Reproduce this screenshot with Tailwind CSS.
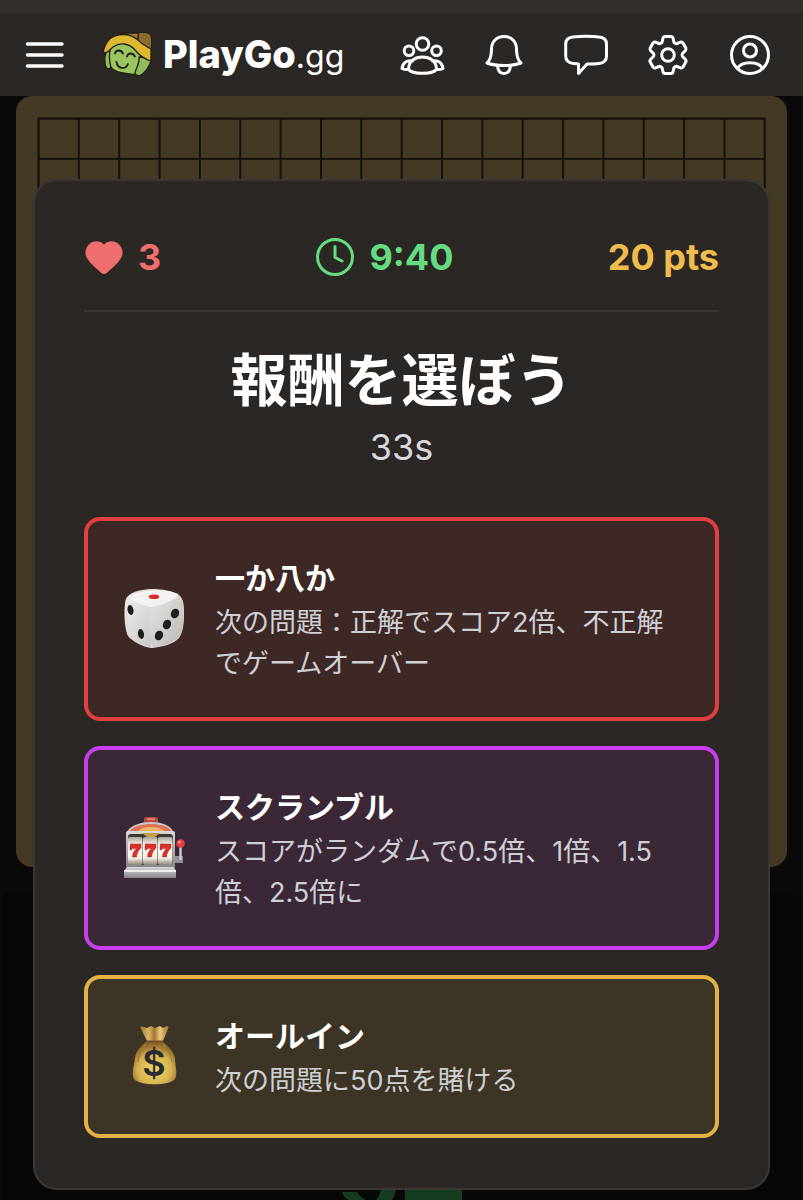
<!DOCTYPE html>
<html lang="ja">
<head>
<meta charset="utf-8">
<meta name="viewport" content="width=device-width, initial-scale=1">
<title>PlayGo.gg</title>
<script src="https://cdn.jsdelivr.net/npm/@tailwindcss/browser@4"></script>
</head>
<body class="bg-[#0b0909] font-['Inter','Noto_Sans_CJK_JP',sans-serif] text-white">
<div class="relative flex h-screen min-h-[1200px] flex-col overflow-hidden">
  <header class="flex h-24 shrink-0 items-end border-t-[14px] border-[#322e2b] bg-[#2b2725] pr-[29px] pl-5">
    <div class="flex h-[82px] w-full items-center justify-between">
      <div class="flex items-center">
        <button type="button" aria-label="メニュー" class="size-12">
          <svg viewBox="0 0 48 48" class="size-12" stroke="#fff" stroke-width="3.400" stroke-linecap="round"><path d="M7.500 13H42M7.500 24H42M7.500 35H42"/></svg>
        </button>
        <a href="#" class="ml-[34px] flex items-center gap-[11px]">
          <svg viewBox="0 0 50 46" class="h-[46px] w-[50px]" stroke="#211d12" stroke-width="1.300" stroke-linejoin="round" stroke-linecap="round">
            <path fill="#a67a32" d="M14 4C18 2 20 1 24 1h19q6 0 6 6v11C43 15 38 10 30 6z"/>
            <path fill="#8a6a2d" stroke="none" d="M36 1h7q6 0 6 6v9L35 6z"/>
            <path fill="none" d="M36.500 1L36 7"/>
            <path fill="#91bb58" d="M8 15C4 19 2 24 3 30c0 4 1 6 3 7 2 0 3-1 3-3z"/>
            <path fill="#9ac45f" d="M9 14C15 8 27 7 33 16c4 3 7 8 6 14l-4 12c-5 1-9 0-14-1-6-1-10-3-12-6-2-6-2-14 0-21z"/>
            <path fill="#91bb58" d="M37 25c1 6-3 11-4 16 1 3 4 3 6 2 5-3 8-8 10-14v-3z"/>
            <path fill="#dcb72f" d="M1 20C3 12 7 6 13 4c9-3 17-1 23 4 4 4 9 7 13 9v12c-7-2-12-6-16-11-6-7-15-8-22-3-4 3-5 7-10 5z"/>
            <path fill="none" stroke-width="1.800" d="M13 21.500c1-4 6-4 8 0M25 24.500c1-4 6-4 8 0M14.500 30c1 7 9 8 11.500 2"/>
          </svg>
          <span class="text-[32px] leading-[44px] whitespace-nowrap"><b class="text-[38px] font-extrabold">PlayGo</b>.gg</span>
        </a>
      </div>
      <nav class="flex items-center gap-[34px]" aria-label="アカウント">
        <button type="button" aria-label="友達" class="size-12">
          <svg viewBox="0 0 48 48" class="size-12" fill="none" stroke="#fff" stroke-width="3" stroke-linecap="round" stroke-linejoin="round"><circle cx="24.500" cy="13" r="6.300"/><circle cx="11" cy="19.700" r="4.800"/><circle cx="38.500" cy="19.700" r="4.800"/><path d="M10.500 37.500C11 30 17 26 24.500 26S38 30 38.500 37.500C38 40 33 42.300 24.500 42.300S11 40 10.500 37.500zM14.500 30C9 28.500 4.500 32 4 37.500c2 1 4 1.300 6.500 1M34.500 30c5.500-1.500 10 2 10.500 7.500-2 1-4 1.300-6.500 1"/></svg>
        </button>
        <button type="button" aria-label="通知" class="size-12">
          <svg viewBox="0 0 48 48" class="size-12" fill="none" stroke="#fff" stroke-width="3" stroke-linecap="round" stroke-linejoin="round"><path d="M7 32c3.500-3 4.500-8 4.500-14C11.500 10.500 16.500 5.500 24 5.500S36.500 10.500 36.500 18c0 6 1 11 4.500 14-5 1.800-11 2.500-17 2.500S12 33.800 7 32zM17.500 34.500c.300 5 2.500 8 6.500 8s6.200-3 6.500-8"/></svg>
        </button>
        <button type="button" aria-label="チャット" class="size-12">
          <svg viewBox="0 0 48 48" class="size-12" fill="none" stroke="#fff" stroke-width="3" stroke-linecap="round" stroke-linejoin="round"><path d="M11 6c8-1 18-1 26 0 5 .500 7.500 2.500 7.500 7v12c0 5-2.500 7-7.500 7.500-3 .400-7 .500-12 .500l-8.500 9.500V33l-5-.500C6.500 32 3.700 30 3.700 25V13C3.700 8.500 6.500 6.500 11 6z"/></svg>
        </button>
        <button type="button" aria-label="設定" class="size-12">
          <svg viewBox="-24 -24 48 48" class="size-12" fill="none" stroke="#fff" stroke-width="3" stroke-linecap="round" stroke-linejoin="round"><circle r="6.300"/><path d="M-6-12.500L-5-17Q-4.600-18.500-3-18.500H3Q4.600-18.500 5-17L6-12.500Q7.500-11 9-11.500L12.500-12.800Q14-13.400 15-12L17.800-7Q18.500-5.700 17.500-4.500L14.500-1.500Q13.700 0 14.500 1.500L17.500 4.500Q18.500 5.700 17.800 7L15 12Q14 13.400 12.500 12.800L9 11.500Q7.500 11 6 12.500L5 17Q4.600 18.500 3 18.500H-3Q-4.600 18.500-5 17L-6 12.500Q-7.500 11-9 11.500L-12.500 12.800Q-14 13.400-15 12L-17.800 7Q-18.500 5.700-17.500 4.500L-14.500 1.500Q-13.700 0-14.500-1.500L-17.500-4.500Q-18.500-5.700-17.800-7L-15-12Q-14-13.400-12.500-12.800L-9-11.500Q-7.500-11-6-12.500Z"/></svg>
        </button>
        <button type="button" aria-label="プロフィール" class="size-12">
          <svg viewBox="0 0 48 48" class="size-12" fill="none" stroke="#fff" stroke-width="3" stroke-linecap="round"><circle cx="24" cy="24" r="18.500"/><circle cx="24" cy="19.500" r="6.500"/><path d="M11.500 37.500C14 33 19 31.800 24 31.800s10 1.200 12.500 5.700"/></svg>
        </button>
      </nav>
    </div>
  </header>

  <div class="px-4" aria-hidden="true">
    <svg viewBox="0 0 771 771" class="block w-full">
      <defs><pattern id="cell" width="40.350" height="40.350" patternUnits="userSpaceOnUse" x="22.500" y="22.500"><path d="M0 0H40.350V40.350H0z" stroke="#15120e" stroke-width="2" fill="none"/></pattern></defs>
      <rect width="771" height="771" rx="16" fill="#433925"/>
      <rect x="22.500" y="22.500" width="726.300" height="726.300" fill="url(#cell)" stroke="#15120e" stroke-width="2"/>
    </svg>
  </div>
  <div class="mx-[2px] mt-[25px] flex grow items-end justify-center rounded-t-lg bg-[#080707]" aria-hidden="true">
    <svg viewBox="0 0 120 16" class="h-4 w-[120px]" fill="#153c20"><path d="M0 8H15Q18 13 24 16H7Q1 13 0 8zM39 0H54Q54 10 50 16H34Q39 11 39 0zM63 0H120V16H63z"/></svg>
  </div>

  <main role="dialog" aria-labelledby="title" class="absolute inset-x-[33px] top-[179px] rounded-3xl border-2 border-[#3a3734] bg-[#2b2725] px-[49px] pt-[51px] pb-[50px]">
    <div class="flex items-center justify-between border-b-2 border-[#393532] pb-7 text-[36px] leading-[50px] font-bold">
      <div class="flex items-center gap-[14px] text-[#f06e6e]">
        <svg viewBox="0 0 40 40" class="size-10" fill="currentColor"><path d="M20 7.500C16 3.500 10 3.500 6 6.500 1 10.500 0 17 3.500 22c3.500 5 9 9.500 13.500 13.700 2 1.700 4 1.700 6 0C27.500 31.500 33 27 36.500 22 40 17 39 10.500 34 6.500 30 3.500 24 3.500 20 7.500z"/></svg>
        <span>3</span>
      </div>
      <div class="flex items-center gap-[14px] text-[#65dc81]">
        <svg viewBox="0 0 40 40" class="size-10" fill="none" stroke="currentColor" stroke-width="3" stroke-linecap="round" stroke-linejoin="round"><circle cx="20" cy="20" r="17.500"/><path d="M20 9.500V20.500L27 24"/></svg>
        <span>9:40</span>
      </div>
      <div class="text-[#f0bc4d]">20 pts</div>
    </div>
    <h1 id="title" class="mt-[34px] text-center text-[57px] leading-[70px] font-bold">報酬を選ぼう</h1>
    <p class="text-center text-[36px] leading-[62px] text-[#d7d9de]">33s</p>

    <div class="mt-[39px] flex flex-col gap-[25px]">
      <button type="button" class="flex items-center gap-[29px] rounded-2xl border-4 border-[#e2403f] bg-[#3d2826] px-9 py-[33px] text-left">
        <svg viewBox="0 0 62 62" class="size-[62px] shrink-0">
          <defs><linearGradient id="dl" x1="0" y1="0" x2="1" y2="1"><stop stop-color="#eeedeb"/><stop offset="1" stop-color="#c9c7c5"/></linearGradient><linearGradient id="dr" x1="0" y1="0" x2="1" y2="1"><stop stop-color="#e7e5e3"/><stop offset="1" stop-color="#bab7b5"/></linearGradient></defs>
          <path fill="#dedcda" d="M3 9C8 3 20 1 29 1s20 2 26 6c5 4 5 12 5 20s-1 17-5 23c-5 6-17 9-27 10C18 59 8 53 4 48 0 41-1 16 3 9z"/>
          <path fill="url(#dl)" d="M2 11C6 9 19 15 24 20c4 5 5 36 2 39C18 57 8 52 4 47 1 40 0 18 2 11z"/>
          <path fill="url(#dr)" d="M28 22c6-5 22-11 29-12 4 4 3 31-1 38-5 6-16 10-26 11-5-2-6-31-2-37z"/>
          <path fill="#f3f2f0" d="M5 8C12 2 43 0 54 6c3 3-17 12-27 13C19 18 2 11 5 8z"/>
          <ellipse cx="30" cy="8.700" rx="5.200" ry="2.300" fill="#d72a2b"/>
          <g fill="#1d1d20"><ellipse cx="6.500" cy="22" rx="3" ry="5" transform="rotate(-10 6.500 22)"/><ellipse cx="17" cy="46" rx="3" ry="5" transform="rotate(-10 17 46)"/><ellipse cx="51" cy="25.500" rx="4" ry="5" transform="rotate(25 51 25.500)"/><ellipse cx="43" cy="36.500" rx="4" ry="5" transform="rotate(25 43 36.500)"/><ellipse cx="35" cy="47.500" rx="4" ry="5" transform="rotate(25 35 47.500)"/></g>
        </svg>
        <span class="min-w-0">
          <strong class="block text-[30px] leading-[48px] font-bold">一か八か</strong>
          <span class="block text-[27px] leading-[41px] text-[#ced0d5]">次の問題：正解でスコア2倍、不正解でゲームオーバー</span>
        </span>
      </button>

      <button type="button" class="flex items-center gap-[29px] rounded-2xl border-4 border-[#c83ded] bg-[#3a2837] px-9 py-[33px] text-left">
        <svg viewBox="0 0 62 62" class="size-[62px] shrink-0">
          <defs><linearGradient id="mt" x1="0" y1="0" x2="0" y2="1"><stop stop-color="#d8d8d9"/><stop offset="1" stop-color="#858587"/></linearGradient><linearGradient id="reel" x1="0" y1="0" x2="0" y2="1"><stop stop-color="#aaa59b"/><stop offset=".3" stop-color="#fffdf4"/><stop offset=".75" stop-color="#f4f0e5"/><stop offset="1" stop-color="#8c877d"/></linearGradient></defs>
          <rect x="20" y="0" width="14" height="8" rx="2" fill="#b34b43"/><path d="M23 2h8" stroke="#ee8e7d" stroke-width="1.500"/>
          <path fill="#c9c7c8" d="M2 17C5 8 17 5 27 5s21 3 23 12z"/><path fill="#df7254" d="M5 15C9 9 18 7 27 7s18 2 21 8z"/><path fill="#efb363" d="M13 15c3-4 8-5 14-5s11 1 14 5z"/>
          <path d="M49 46h10v-7H49" fill="#929195"/><path d="M56.500 28v15" stroke="#c9c9cc" stroke-width="2.500"/><circle cx="56.500" cy="26.500" r="4.300" fill="#e63c40"/><circle cx="55.500" cy="25" r="1.300" fill="#ffa6a0"/>
          <rect x="2" y="14" width="49" height="37" rx="2" fill="url(#mt)"/><rect x="4" y="17" width="45" height="31" rx="3" fill="#3d3932"/><path fill="#c69d48" d="M18 16h18l-5 4h-8z"/>
          <rect x="4" y="20" width="14.500" height="28" rx="2" fill="url(#reel)"/><rect x="19" y="20" width="14.500" height="28" rx="2" fill="url(#reel)"/><rect x="34" y="20" width="14.500" height="28" rx="2" fill="url(#reel)"/>
          <g fill="#dc302b" stroke="#8e2019" stroke-width=".400"><path id="seven" d="M6 28l1-1.500 1 .500h9v4c-3 3-4 5-4.500 9H8.500c0-4 1.500-6 4-8.500H8.500L7.500 33H6z"/><use href="#seven" x="15"/><use href="#seven" x="30"/></g>
          <path fill="url(#mt)" d="M3 50h47l2 4v7H0v-7z"/><path fill="#ededee" d="M0 53h52v2H0z"/>
        </svg>
        <span class="min-w-0">
          <strong class="block text-[30px] leading-[48px] font-bold">スクランブル</strong>
          <span class="block text-[27px] leading-[41px] text-[#ced0d5]">スコアがランダムで0.5倍、1倍、1.5倍、2.5倍に</span>
        </span>
      </button>

      <button type="button" class="flex items-center gap-[29px] rounded-2xl border-4 border-[#e3b145] bg-[#3c3424] px-9 py-[33px] text-left">
        <svg viewBox="0 0 62 62" class="size-[62px] shrink-0">
          <defs><radialGradient id="bag" cx=".5" cy=".65" r=".6"><stop stop-color="#f3d765"/><stop offset=".65" stop-color="#d6b14f"/><stop offset="1" stop-color="#8e6629"/></radialGradient><linearGradient id="neck"><stop stop-color="#9b7137"/><stop offset=".3" stop-color="#dcb565"/><stop offset=".5" stop-color="#a0763a"/><stop offset=".7" stop-color="#edcb78"/><stop offset="1" stop-color="#9b7137"/></linearGradient></defs>
          <path fill="url(#bag)" d="M22 16h17c5 4 10 8 12 16 0 7 3 16 0 21-5 7-36 7-41 0-3-5 0-14 1-21 1-8 6-12 11-16z"/>
          <path fill="none" stroke="#a37e38" stroke-width="1.200" d="M22 18c-4 6-7 9-8 18M27 18c-2 3-3 5-3 8M35 18c2 3 3 5 4 8M39 18c4 6 8 10 9 18"/>
          <path fill="url(#neck)" d="M17 3c-2-2 0-3 2-2l4 1 4-2 4 2 5-2 3 2 4-2c2 0 2 2 1 3l-5 12H23z"/><path d="M22 15.500h17" stroke="#70502a" stroke-width="2"/>
          <text x="30" y="50" text-anchor="middle" font-family="Inter" font-size="36" font-weight="600" fill="#2b2a31">$</text>
        </svg>
        <span class="min-w-0">
          <strong class="block text-[30px] leading-[48px] font-bold">オールイン</strong>
          <span class="block text-[27px] leading-[41px] text-[#ced0d5]">次の問題に50点を賭ける</span>
        </span>
      </button>
    </div>
  </main>
</div>
</body>
</html>
